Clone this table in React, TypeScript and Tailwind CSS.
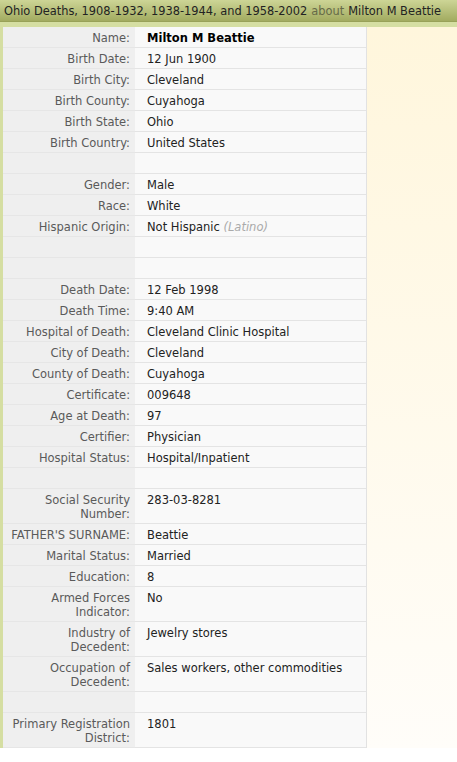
import React from "react";

type Row = { label: string; value?: React.ReactNode };

const rows: Row[] = [
  { label: "Name:", value: <span className="font-bold text-black">Milton M Beattie</span> },
  { label: "Birth Date:", value: "12 Jun 1900" },
  { label: "Birth City:", value: "Cleveland" },
  { label: "Birth County:", value: "Cuyahoga" },
  { label: "Birth State:", value: "Ohio" },
  { label: "Birth Country:", value: "United States" },
  { label: "" },
  { label: "Gender:", value: "Male" },
  { label: "Race:", value: "White" },
  {
    label: "Hispanic Origin:",
    value: (
      <>
        Not Hispanic <span className="italic text-[#aaaaaa]">(Latino)</span>
      </>
    ),
  },
  { label: "" },
  { label: "" },
  { label: "Death Date:", value: "12 Feb 1998" },
  { label: "Death Time:", value: "9:40 AM" },
  { label: "Hospital of Death:", value: "Cleveland Clinic Hospital" },
  { label: "City of Death:", value: "Cleveland" },
  { label: "County of Death:", value: "Cuyahoga" },
  { label: "Certificate:", value: "009648" },
  { label: "Age at Death:", value: "97" },
  { label: "Certifier:", value: "Physician" },
  { label: "Hospital Status:", value: "Hospital/Inpatient" },
  { label: "" },
  { label: "Social Security Number:", value: "283-03-8281" },
  { label: "FATHER'S SURNAME:", value: "Beattie" },
  { label: "Marital Status:", value: "Married" },
  { label: "Education:", value: "8" },
  { label: "Armed Forces Indicator:", value: "No" },
  { label: "Industry of Decedent:", value: "Jewelry stores" },
  { label: "Occupation of Decedent:", value: "Sales workers, other commodities" },
  { label: "" },
  { label: "Primary Registration District:", value: "1801" },
];

export default function App() {
  return (
    <div
      className="w-[457px] h-[762px] bg-white text-[11.5px] leading-[14px]"
      style={{ fontFamily: '"DejaVu Sans", Verdana, sans-serif' }}
    >
      <div className="h-[22px] bg-gradient-to-b from-[#cdd596] to-[#a2ab60] border-b border-[#98a158] pl-[4px] flex items-center text-[11.4px] text-[#222] whitespace-nowrap">
        Ohio Deaths, 1908-1932, 1938-1944, and 1958-2002
        <span className="text-[#666a48] ml-[4px]">about</span>
        <span className="ml-[4px]">Milton M Beattie</span>
      </div>
      <div className="bg-[#d5dea2] pt-[5px] pl-[3px] flex">
        <div className="w-[364px] border-r border-[#e2e2e2] bg-[#f9f9f9]">
          {rows.map((r, i) => (
            <div key={i} className="grid grid-cols-[132px_1fr]">
              <div className="bg-[#efefef] text-right text-[#5a5a5a] pr-[5px] pl-[8px] pt-[4px] pb-[2px] border-b border-[#e6e6e6] min-h-[21px]">
                {r.label}
              </div>
              <div className="bg-[#f9f9f9] text-[#222] pl-[12px] pr-[4px] pt-[4px] pb-[2px] border-b border-[#e4e4e4] min-h-[21px]">
                {r.value}
              </div>
            </div>
          ))}
        </div>
        <div className="flex-1 bg-gradient-to-b from-[#fff6dc] to-[#fffdf9]" />
      </div>
    </div>
  );
}
